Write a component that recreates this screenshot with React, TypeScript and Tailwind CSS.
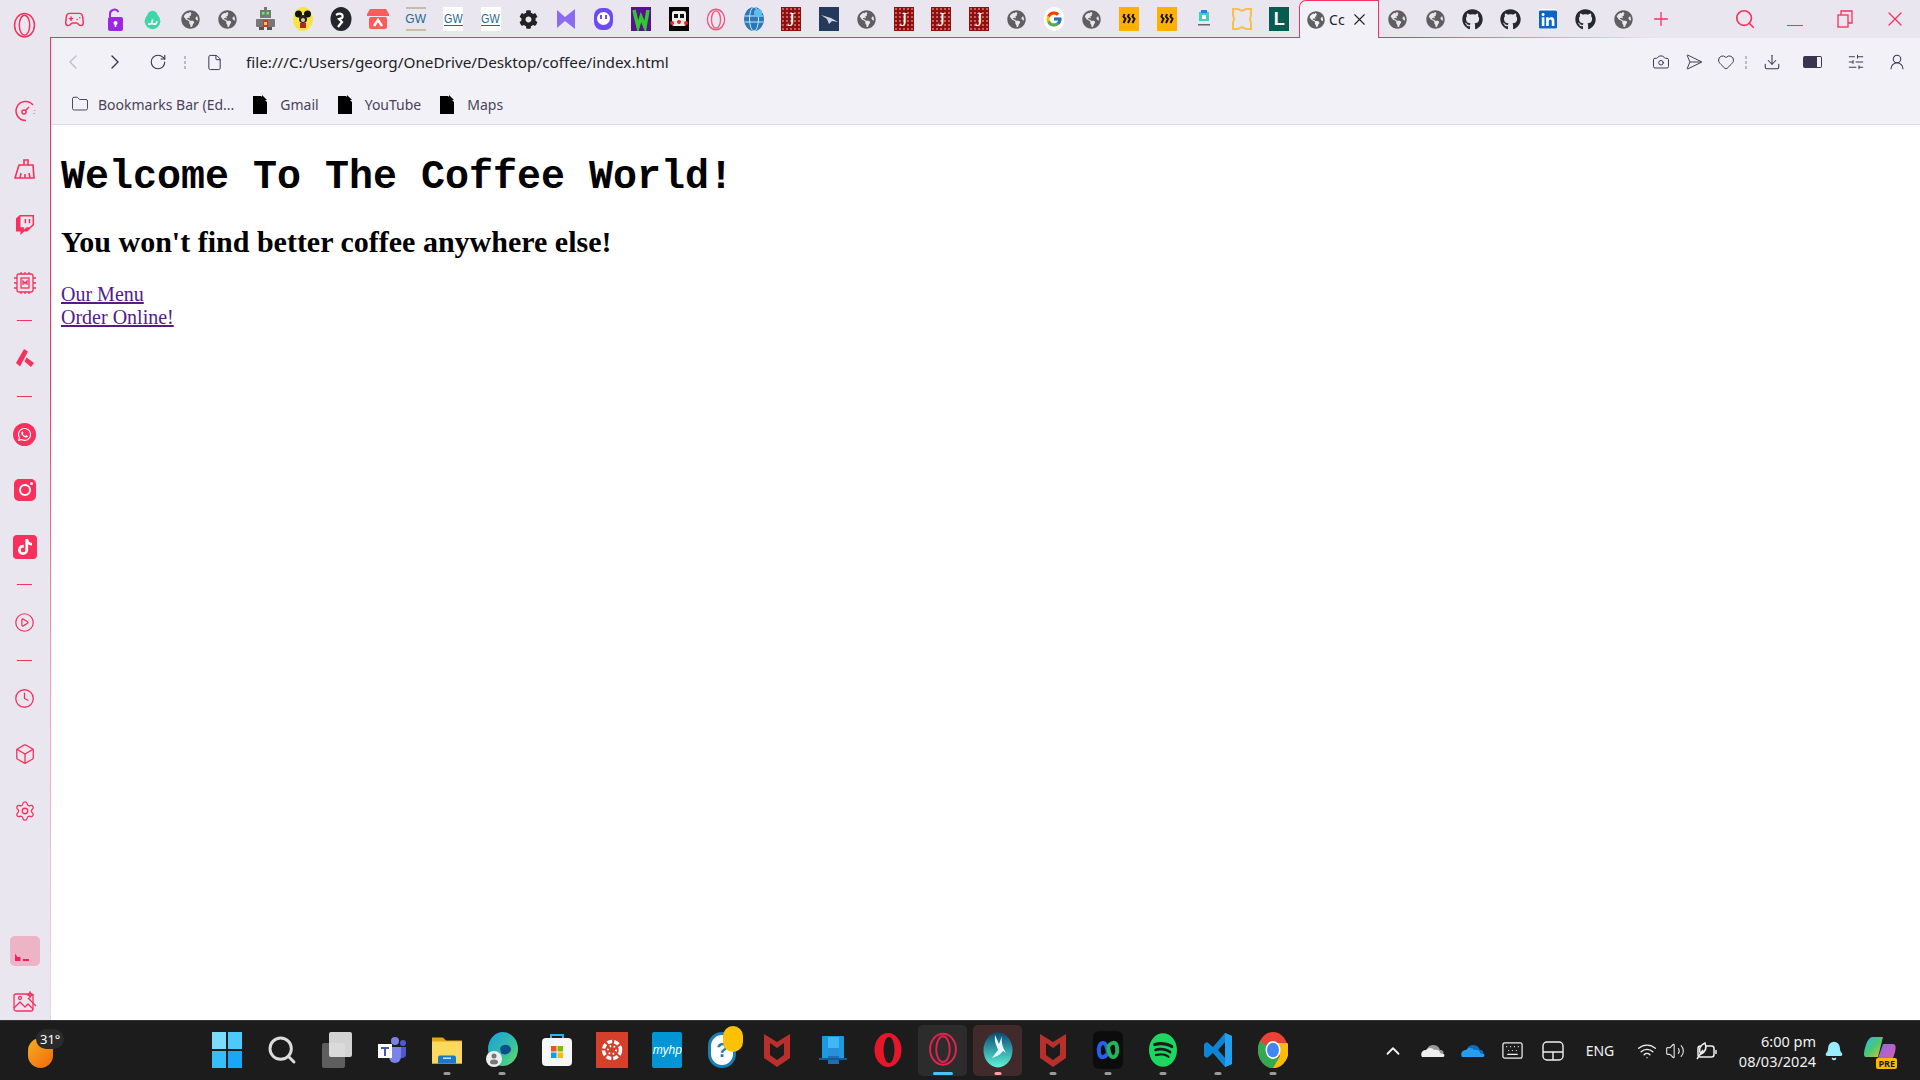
import React from "react";
import { FaGithub, FaGlobeAmericas, FaLinkedin, FaTwitch, FaWhatsapp, FaTiktok, FaSpotify, FaCog } from "react-icons/fa";
import { FcGoogle } from "react-icons/fc";
import {
  Gamepad2, ChevronLeft, ChevronRight, RotateCw, File, Folder, Camera, Send, Heart, Download,
  SlidersHorizontal, UserRound, Search, X, Plus, CirclePlay, Clock, Box, Settings, ChevronUp, Wifi, Volume2, Keyboard, Bell,
} from "lucide-react";

const RED = "#f8305c";
const Globe = () => <FaGlobeAmericas size={19} color="#5f5f5f" />;
const Gh = () => <FaGithub size={21} color="#24292f" />;
const J = () => (
  <div className="w-5 h-6 bg-[#8f0f0f] bg-[radial-gradient(#c86060_1px,transparent_1px)] bg-[length:4px_4px] text-white flex items-center justify-center text-[19px] leading-none [font-family:'Liberation_Serif',serif]">J</div>
);
const Gw = ({ tan }: { tan?: boolean }) => (
  <div className={`w-5 h-6 flex flex-col items-center justify-center text-[12px] leading-[12px] [font-family:'Liberation_Sans',sans-serif] text-[#1d6a8f] ${tan ? "bg-transparent border-y-2 border-[#c9bda3]" : "bg-white"}`}>
    <span className={tan ? "" : "border-b border-[#1d6a8f] scale-x-90"}>GW</span>
  </div>
);
const Heat = () => (
  <div className="w-5 h-6 bg-[#ffb000] flex items-center justify-center">
    <svg width="14" height="12" viewBox="0 0 14 12" fill="none" stroke="#111" strokeWidth="2">
      <path d="M2.5 1 l-1 2.5 l2 2.5 l-2 4M7 1 l-1 2.5 l2 2.5 l-2 4M11.5 1 l-1 2.5 l2 2.5 l-2 4" />
    </svg>
  </div>
);
const Ring = ({ c = RED, s = 24 }: { c?: string; s?: number }) => (
  <svg width={s} height={s * 1.15} viewBox="0 0 24 28" fill="none" stroke={c} strokeWidth="1.6">
    <ellipse cx="12" cy="14" rx="10.5" ry="12.5" />
    <ellipse cx="12" cy="14" rx="5.5" ry="10.5" />
  </svg>
);
const PageFile = () => (
  <svg width="14" height="19" viewBox="0 0 14 19"><path d="M0 1h8l6 6v12H0z" fill="#000" /><path d="M9 0l5 5H9z" fill="#000" /></svg>
);

const tabs: React.ReactNode[] = [
  <Gamepad2 size={21} color={RED} strokeWidth={1.7} className="-translate-x-[3px]" />,
  <svg width="15" height="23" viewBox="0 0 15 23"><path d="M2 9V6a4.500 4.500 0 0 1 8.500-2" stroke="#9b27e0" strokeWidth="2" fill="none" /><rect y="9" width="15" height="14" rx="2" fill="#9b27e0" /><circle cx="7.500" cy="15" r="2" fill="#fff" /><rect x="6.700" y="15" width="1.600" height="4" fill="#fff" /></svg>,
  <svg width="21" height="21" viewBox="0 0 24 24"><circle cx="12" cy="14" r="9" fill="#3fd6a7" /><circle cx="12" cy="8" r="6" fill="#3fd6a7" /><path d="M7 17c4 1 5-1 5-5m0 5c3 1 5 0 5-3" stroke="#fff" strokeWidth="2" fill="none" /></svg>,
  <Globe />,
  <Globe />,
  <svg width="21" height="24" viewBox="0 0 21 24"><rect x="9" y="0" width="3" height="3" fill="#777" /><rect x="5" y="3" width="11" height="8" fill="#777" /><rect x="7" y="5" width="2.500" height="2.500" fill="#5f5" /><rect x="11.500" y="5" width="2.500" height="2.500" fill="#5f5" /><rect x="1" y="12" width="19" height="8" rx="1" fill="#777" /><rect x="8" y="13" width="5" height="7" fill="#c33" /><rect x="9" y="15" width="3" height="3" fill="#ec3" /><rect x="4" y="20" width="5" height="3" fill="#555" /><rect x="12" y="20" width="5" height="3" fill="#555" /></svg>,
  <svg width="20" height="24" viewBox="0 0 20 24"><ellipse cx="10" cy="12" rx="10" ry="12" fill="#f6e443" /><circle cx="5.500" cy="7" r="3.500" fill="#111" /><circle cx="14.500" cy="7" r="3.500" fill="#111" /><circle cx="10" cy="12" r="4" fill="#222" /><circle cx="10" cy="13" r="2" fill="#e8c9a0" /><rect x="7" y="16" width="6" height="5" fill="#b22" /></svg>,
  <svg width="22" height="24" viewBox="0 0 22 24"><ellipse cx="11" cy="12" rx="10.500" ry="12" fill="#23262b" /><path d="M6 8c5-3 8 0 6 3l-3 1 3 3-4 5" stroke="#fff" strokeWidth="2.200" fill="none" /></svg>,
  <svg width="22" height="22" viewBox="0 0 22 22"><path d="M3 1h16l3 5v2H0V6z" fill="#fa5c5c" /><rect x="2" y="9" width="18" height="12" rx="2" fill="#fa5c5c" /><path d="M7 18l4-6 4 6" stroke="#fff" strokeWidth="2.400" fill="none" /></svg>,
  <Gw tan />,
  <Gw />,
  <Gw />,
  <FaCog size={19} color="#222" />,
  <svg width="20" height="22" viewBox="0 0 20 22"><path d="M1 2l8 7 10-8v20l-10-8-8 7z" fill="#8b6cf0" /></svg>,
  <svg width="21" height="24" viewBox="0 0 21 24"><rect x="1" y="1" width="19" height="22" rx="8" fill="#6a4cf0" /><circle cx="10.500" cy="11.500" r="6.500" fill="#fff" /><rect x="7" y="8" width="2" height="4" fill="#6a4cf0" /><rect x="12" y="8" width="2" height="4" fill="#6a4cf0" /></svg>,
  <svg width="20" height="24" viewBox="0 0 20 24"><rect width="20" height="24" fill="#5a0f90" /><path d="M3 3l4 17 3-10 4 10 3-17" stroke="#2fc92f" strokeWidth="3.500" fill="none" /></svg>,
  <svg width="20" height="24" viewBox="0 0 20 24"><rect width="20" height="24" fill="#050505" /><rect x="3" y="4" width="14" height="15" rx="2" fill="#eee" /><rect x="5" y="7" width="4" height="4" fill="#111" /><rect x="11" y="7" width="4" height="4" fill="#111" /><circle cx="3" cy="16" r="2" fill="#e22" /><circle cx="17" cy="16" r="2" fill="#e22" /><circle cx="10" cy="15" r="2" fill="#e22" /></svg>,
  <Ring s={20} c="#f9527c" />,
  <svg width="20" height="24" viewBox="0 0 20 24"><ellipse cx="10" cy="12" rx="10" ry="12" fill="#2a78b8" /><ellipse cx="10" cy="12" rx="4.500" ry="12" fill="none" stroke="#cfe8f8" /><path d="M1 9h18M1 15h18" stroke="#cfe8f8" /><circle cx="14" cy="6" r="4" fill="#5cc0ee" /></svg>,
  <J />,
  <svg width="20" height="24" viewBox="0 0 20 24"><rect width="20" height="24" fill="#233a5a" /><path d="M2 8l10 3 7 4-6-1-3 3-2-5z" fill="#cdd5df" /></svg>,
  <Globe />,
  <J />,
  <J />,
  <J />,
  <Globe />,
  <div className="w-5 h-6 rounded-full bg-white flex items-center justify-center"><FcGoogle size={18} /></div>,
  <Globe />,
  <Heat />,
  <Heat />,
  <svg width="16" height="20" viewBox="0 0 16 20"><rect x="3" y="3" width="10" height="9" fill="#3ad1c0" /><rect x="5" y="1" width="6" height="3" fill="#2a7fd0" /><rect x="6" y="6" width="4" height="4" fill="#fff" /><rect x="2" y="15" width="12" height="1.500" fill="#666" /></svg>,
  <svg width="20" height="24" viewBox="0 0 20 24" fill="none" stroke="#f6c04a" strokeWidth="2"><path d="M1 2h5l4 2 4-2h5v6l-1 4 1 4v6h-5l-4-2-4 2H1v-6l1-4-1-4z" /></svg>,
  <div className="w-5 h-6 bg-[#055d52] text-white font-bold text-[18px] leading-none flex items-center justify-center [font-family:'Liberation_Sans',sans-serif]">L</div>,
];

const after: React.ReactNode[] = [
  <Globe />,
  <Globe />,
  <Gh />,
  <Gh />,
  <div className="w-[18px] h-5 bg-white flex items-center justify-center"><FaLinkedin size={21} color="#0a66c2" /></div>,
  <Gh />,
  <Globe />,
  <Plus size={22} color={RED} strokeWidth={1.4} />,
];

const Broom = () => (
  <svg width="24" height="24" viewBox="0 0 24 24" fill="none" stroke={RED} strokeWidth="1.6"><path d="M11 8V3h4v5" /><path d="M6 8h14l1 13H2z" /><path d="M7 21l1-5M12 21v-4M17 21l-1-5" /></svg>
);

const side: { cls: string; node: React.ReactNode }[] = [
  { cls: "mt-[10px]", node: <Ring s={23} /> },
  { cls: "mt-[56px]", node: <svg width="22" height="22" viewBox="0 0 22 22" fill="none" stroke={RED} strokeWidth="1.5"><path d="M19 5A9.500 9.500 0 1 0 12 20.400" /><path d="M20.500 10v.5M20 13.500v.5" /><circle cx="10" cy="12" r="2" /><path d="M11.500 10.500L15 7" /></svg> },
  { cls: "mt-[28px]", node: <Broom /> },
  { cls: "mt-[26px]", node: <FaTwitch size={20} color={RED} /> },
  { cls: "mt-[28px]", node: <svg width="24" height="24" viewBox="0 0 24 24" fill="none" stroke={RED} strokeWidth="1.3"><rect x="4" y="3" width="16" height="18" rx="2" /><rect x="8" y="7" width="8" height="10" /><path d="M8 1v2M12 1v2M16 1v2M8 21v2M12 21v2M16 21v2M1 7h3M1 12h3M1 17h3M20 7h3M20 12h3M20 17h3" /><path d="M10 14v-4l2 2.500 2-2.500v4" /></svg> },
  { cls: "mt-[7px]", node: <div className="w-[15px] h-px bg-[#f8305c]" /> },
  { cls: "mt-[8px]", node: <svg width="20" height="20" viewBox="0 0 20 20" fill={RED}><path d="M9 1l4 2.500-8 15L1 15zM11.500 9.500l7.500 5.500-3 4-6.500-5.500z" /></svg> },
  { cls: "mt-[8px]", node: <div className="w-[15px] h-px bg-[#f8305c]" /> },
  { cls: "mt-[8px]", node: <div className="w-[23px] h-[23px] rounded-full bg-[#f8305c] flex items-center justify-center"><FaWhatsapp size={15} color="#fff" /></div> },
  { cls: "mt-[26px]", node: <div className="w-[22px] h-[22px] rounded-[5px] bg-[#f8305c] relative flex items-center justify-center"><div className="w-[12px] h-[12px] rounded-full border-[2.500px] border-white" /><div className="absolute top-[3px] right-[3px] w-[3px] h-[3px] rounded-full bg-white" /></div> },
  { cls: "mt-[27px]", node: <div className="w-6 h-6 rounded-[4px] bg-[#f8305c] flex items-center justify-center"><FaTiktok size={16} color="#fff" /></div> },
  { cls: "mt-[7px]", node: <div className="w-[15px] h-px bg-[#f8305c]" /> },
  { cls: "mt-[8px]", node: <CirclePlay size={21} color={RED} strokeWidth={1.4} /> },
  { cls: "mt-[8px]", node: <div className="w-[15px] h-px bg-[#f8305c]" /> },
  { cls: "mt-[8px]", node: <Clock size={21} color={RED} strokeWidth={1.5} /> },
  { cls: "mt-[26px]", node: <Box size={22} color={RED} strokeWidth={1.4} /> },
  { cls: "mt-[27px]", node: <Settings size={22} color={RED} strokeWidth={1.4} /> },
  { cls: "mt-[110px]", node: <div className="w-[30px] h-[30px] rounded-[5px] bg-[#edb3c6] flex items-end gap-[2px] pl-[5px] pb-[5px]"><div className="w-[6px] h-2 bg-[#f8205a] [clip-path:polygon(0_0,50%_50%,100%_50%,100%_100%,0_100%)]" /><div className="w-[6px] h-[2px] bg-[#f8205a]" /></div> },
  { cls: "mt-[21px]", node: <svg width="24" height="22" viewBox="0 0 24 22" fill="none" stroke={RED} strokeWidth="1.3"><rect x="1" y="3" width="19" height="17" rx="2" /><path d="M1 17l6-6 5 5 3-3 5 5M15 7l8 8M17 1l.8 2 2 .8-2 .8-.8 2-.8-2-2-.8 2-.8z" /><circle cx="7" cy="7" r="1.500" /></svg> },
];

const McAfee = () => (
  <svg width="28" height="36" viewBox="0 0 28 36"><path d="M1 2l13 8 13-8v24l-13 9-13-9z" fill="#b8302c" /><path d="M7 11l7 5 7-5v12l-7 5-7-5z" fill="#1c1c1c" /></svg>
);

const taskIcons: { node: React.ReactNode; bar?: string; bg?: string }[] = [
  { node: <div className="grid grid-cols-2 gap-[2px] w-[30px] h-[36px]"><div className="bg-[#7bdcff]" /><div className="bg-[#4cc9fd]" /><div className="bg-[#36bdfc]" /><div className="bg-[#16a8f6]" /></div> },
  { node: <Search size={32} color="#dcdcdc" strokeWidth={2.2} /> },
  { node: <div className="relative w-[30px] h-[36px]"><div className="absolute left-0 bottom-0 w-[23px] h-[25px] rounded-[2px] bg-[#5e5e5e]" /><div className="absolute right-0 top-0 w-[23px] h-[25px] rounded-[2px] bg-[#e8e8e8] opacity-90" /></div> },
  { node: <svg width="30" height="30" viewBox="0 0 30 28"><circle cx="18" cy="5" r="4" fill="#7b83eb" /><circle cx="26" cy="7" r="3" fill="#5059c9" /><path d="M12 11h12v10a6 6 0 0 1-12 0z" fill="#7b83eb" /><path d="M24 11h5v8a4 4 0 0 1-5 3z" fill="#5059c9" /><rect x="1" y="8" width="14" height="14" fill="#fff" /><path d="M4 11h8v2H9v7H7v-7H4z" fill="#4b53bc" /></svg> },
  { bar: "#9a9a9a", node: <svg width="30" height="33" viewBox="0 0 30 28"><path d="M0 2h11l3 3h16v23H0z" fill="#e3a80d" /><rect y="6" width="30" height="22" fill="#fbd85e" /><path d="M6 28v-6a2 2 0 0 1 2-2h14a2 2 0 0 1 2 2v6z" fill="#1a78c6" /><rect x="11" y="22" width="8" height="1.500" fill="#bfe3ff" /></svg> },
  { bar: "#9a9a9a", node: <svg width="32" height="36" viewBox="0 0 32 36"><defs><linearGradient id="edg" x1="0" y1="0" x2="1" y2="1"><stop offset="0" stopColor="#1b9de2" /><stop offset="0.600" stopColor="#35c1a0" /><stop offset="1" stopColor="#6fdc5b" /></linearGradient></defs><ellipse cx="17" cy="17" rx="15" ry="17" fill="url(#edg)" /><path d="M14 16c3-5 10-4 11 1 0 5-7 7-10 4z" fill="#0d4f8c" /><circle cx="8" cy="27" r="8" fill="#eee" /><circle cx="8" cy="24" r="2.500" fill="#777" /><ellipse cx="8" cy="30" rx="4" ry="2.500" fill="#777" /></svg> },
  { node: <svg width="30" height="36" viewBox="0 0 30 36"><path d="M9 7V3h12v4" stroke="#2cb3ea" strokeWidth="2" fill="none" /><rect y="6" width="30" height="28" rx="4" fill="#f7f7f7" /><rect x="9" y="14" width="5.500" height="5.500" fill="#f25022" /><rect x="15.500" y="14" width="5.500" height="5.500" fill="#7fba00" /><rect x="9" y="20.500" width="5.500" height="5.500" fill="#00a4ef" /><rect x="15.500" y="20.500" width="5.500" height="5.500" fill="#ffb900" /></svg> },
  { node: <div className="w-[32px] h-9 bg-[#d5402b] flex items-center justify-center"><svg width="22" height="22" viewBox="0 0 22 22" fill="none" stroke="#fff"><circle cx="11" cy="11" r="8.500" strokeWidth="3.500" strokeDasharray="5 2" /><circle cx="11" cy="11" r="4" strokeWidth="2" strokeDasharray="1.500 2.500" /></svg></div> },
  { node: <div className="w-[30px] h-9 rounded-[2px] bg-[#0096d6] text-white italic text-[12px] flex items-center justify-center [font-family:'Liberation_Sans',sans-serif]">myhp</div> },
  { node: <div className="relative w-[30px] h-9 flex items-center justify-center"><div className="w-[28px] h-[36px] rounded-full bg-white border-[3px] border-[#1a7fb5] text-[#1a7fb5] font-bold text-[20px] flex items-center justify-center [font-family:'Liberation_Sans',sans-serif]">?</div><div className="absolute -top-[6px] -right-[6px] w-5 h-[26px] rounded-full bg-[#ffc107]" /></div> },
  { node: <McAfee /> },
  { node: <svg width="30" height="32" viewBox="0 0 30 32"><rect x="4" y="2" width="22" height="24" rx="1" fill="#1a9be0" /><rect x="10" y="3" width="11" height="27" fill="#45b6f4" /><rect x="10" y="14" width="11" height="8" fill="#2a8fd8" /><rect x="10" y="22" width="11" height="8" fill="#1b6db5" /><rect x="1" y="24" width="28" height="2" fill="#135a96" /></svg> },
  { node: <svg width="28" height="36" viewBox="0 0 28 36"><ellipse cx="14" cy="18" rx="13.500" ry="17" fill="#e6162b" /><ellipse cx="15" cy="18" rx="5.500" ry="13" fill="#1c1c1c" /></svg> },
  { bar: "#4cc2ff", bg: "bg-[#2c2c2c]", node: <Ring s={30} c="#e5224f" /> },
  { bar: "#ff9aa8", bg: "bg-[#402a2c]", node: <svg width="30" height="36" viewBox="0 0 30 36"><defs><linearGradient id="aur" x1="0" y1="0" x2="0" y2="1"><stop offset="0" stopColor="#0a4a72" /><stop offset="1" stopColor="#5ff5dc" /></linearGradient></defs><ellipse cx="15" cy="18" rx="14.500" ry="17.500" fill="url(#aur)" /><path d="M12 3c-1 8 2 11 3 15l-6 8c6-2 9-4 11-7l3 2c-3-5-5-10-4-17l-3 8z" fill="#e5f7ff" /></svg> },
  { bar: "#9a9a9a", node: <McAfee /> },
  { bar: "#9a9a9a", node: <div className="w-[30px] h-[38px] rounded-[6px] bg-[#0c0c0c] flex items-center justify-center"><svg width="26" height="22" viewBox="0 0 26 22" fill="none" strokeWidth="4"><path d="M13 14c-3 5-8 6-9 0S5 4 8 4s4 4 5 10" stroke="#2a5cf0" /><path d="M13 8c3-5 8-6 9 0s-1 10-4 10-4-4-5-10" stroke="#23b45a" /></svg></div> },
  { bar: "#9a9a9a", node: <div className="w-[28px] h-[36px] flex items-center justify-center"><FaSpotify size={30} color="#1ed760" className="scale-y-[1.200]" /></div> },
  { bar: "#9a9a9a", node: <svg width="30" height="36" viewBox="0 0 30 36"><path d="M22 1l7 3v28l-7 3-12-14-6 5-3-2v-12l3-2 6 5z" fill="#0e85d4" /><path d="M22 10l-7 8 7 8z" fill="#1c1c1c" /><path d="M22 1l7 3v28l-7 3z" fill="#22a0ef" /></svg> },
  { bar: "#9a9a9a", node: <svg width="30" height="36" viewBox="0 0 30 36"><ellipse cx="15" cy="18" rx="15" ry="18" fill="#ea4335" /><path d="M15 18L2 9A15 18 0 0 0 15 36l7-9z" fill="#34a853" /><path d="M15 11h14.500A15 18 0 0 1 15 36l7-12z" fill="#fbbc05" /><ellipse cx="15" cy="18" rx="7.500" ry="9" fill="#fff" /><ellipse cx="15" cy="18" rx="6" ry="7.300" fill="#4285f4" /></svg> },
];

const Dots = () => (
  <div className="flex flex-col gap-[2px]">
    <div className="w-[2px] h-[3px] bg-[#bcb8cc]" />
    <div className="w-[2px] h-[3px] bg-[#bcb8cc]" />
    <div className="w-[2px] h-[3px] bg-[#bcb8cc]" />
  </div>
);

const Cloud = ({ a, b }: { a: string; b: string }) => (
  <svg width="24" height="15" viewBox="0 0 24 15"><path d="M6 6a7 7 0 0 1 13 1c3 0 4 2 3 4z" fill={a} /><path d="M1 14c-2-3 0-7 4-7 3-3 7-2 8 0 4-1 6 1 6 3l4 1c1 2 0 3-2 3z" fill={b} /></svg>
);

const tool = "text-[#3b3450]";

export default function App() {
  return (
    <div className="w-[1920px] h-[1080px] overflow-hidden flex flex-col bg-white [font-family:'Noto_Sans',sans-serif]">
      <div className="flex h-[1020px]">
        <aside className="relative w-[51px] shrink-0 bg-[#e9e6f0] flex flex-col items-center pr-[2px]">
          {side.map((s, i) => (
            <div key={i} className={`${s.cls} h-[30px] w-full flex items-center justify-center`}>{s.node}</div>
          ))}
          <div className="absolute right-0 top-[37px] bottom-0 w-px bg-[linear-gradient(to_bottom,#f8305c_35%,#f6a0b8_65%,#e9d8e4_100%)]" />
        </aside>

        <div className="flex-1 flex flex-col min-w-0">
          <div className="relative h-[38px] shrink-0 bg-[#e9e6f0] flex items-center pl-[8px]">
            {tabs.map((t, i) => (
              <div key={i} className="w-[37.55px] h-[36px] shrink-0 flex items-center justify-center">{t}</div>
            ))}
            <div className="relative z-10 ml-[1px] h-[38px] w-[80px] shrink-0 bg-[#f3f1f8] border border-b-0 border-[#f8305c] rounded-tl-[7px] rounded-tr-[1px] flex items-center pl-[7px]">
              <FaGlobeAmericas size={18} color="#5f5f5f" />
              <span className="ml-[4px] w-[17px] text-[14px] text-[#222]">Cc</span>
              <X size={19} color="#222" strokeWidth={1.4} className="ml-[4px]" />
            </div>
            {after.map((t, i) => (
              <div key={i} className="w-[37.55px] h-[36px] shrink-0 flex items-center justify-center first:ml-[2px]">{t}</div>
            ))}
            <div className="ml-auto flex items-center">
              <div className="w-[50px] h-[38px] flex items-center justify-center"><Search size={22} color={RED} strokeWidth={1.8} /></div>
              <div className="w-[50px] h-[38px] flex items-center justify-center pt-[12px]"><div className="w-[16px] h-px bg-[#f8305c]" /></div>
              <div className="w-[50px] h-[38px] flex items-center justify-center"><svg width="16" height="18" viewBox="0 0 16 18" fill="none" stroke={RED} strokeWidth="1.300"><rect x="1" y="5" width="10" height="12" /><path d="M4 5V1h11v12h-4" /></svg></div>
              <div className="w-[50px] h-[38px] flex items-center justify-center"><X size={24} color={RED} strokeWidth={1.3} /></div>
            </div>
            <div className="absolute left-0 right-0 bottom-0 h-px bg-[linear-gradient(to_right,#f8305c_72%,transparent_86%)]" />
          </div>

          <div className="h-[87px] shrink-0 bg-[#f3f1f8] border-b border-[#dcd9e6] flex flex-col">
            <div className="h-[48px] flex items-center">
              <div className="w-[44px] flex justify-center"><ChevronLeft size={24} color="#bcb8c9" strokeWidth={1.2} /></div>
              <div className="w-[40px] flex justify-center"><ChevronRight size={24} color="#3b3450" strokeWidth={1.4} /></div>
              <div className="w-[46px] flex justify-center"><RotateCw size={18} color="#3b3450" strokeWidth={1.5} /></div>
              <div className="w-[8px] flex justify-center"><Dots /></div>
              <div className="w-[50px] flex justify-center"><File size={17} color="#3b3450" strokeWidth={1.4} /></div>
              <span className="ml-[7px] pt-px text-[15.3px] text-[#222] whitespace-nowrap">file:///C:/Users/georg/OneDrive/Desktop/coffee/index.html</span>
              <div className="ml-auto flex items-center pr-[7px]">
                <div className={`w-[34px] flex justify-center ${tool}`}><Camera size={18} strokeWidth={1.3} className="translate-x-[1px]" /></div>
                <div className={`w-[32px] flex justify-center ${tool}`}><Send size={18} strokeWidth={1.2} className="rotate-45 -translate-x-[2px]" /></div>
                <div className={`w-[32px] flex justify-center ${tool}`}><Heart size={18} strokeWidth={1.3} className="translate-x-[1px]" /></div>
                <div className="w-[10px] flex justify-center"><Dots /></div>
                <div className={`w-[42px] flex justify-center ${tool}`}><Download size={18} strokeWidth={1.4} /></div>
                <div className="w-[38px] flex justify-center"><div className="flex items-center"><div className="w-[14px] h-[12px] rounded-l-[2px] bg-[#3b3450]" /><div className="w-[5px] h-[12px] rounded-r-[2px] border border-l-0 border-[#3b3450]" /></div></div>
                <div className={`w-[50px] flex justify-center ${tool}`}><SlidersHorizontal size={18} strokeWidth={1.3} /></div>
                <div className={`w-[32px] flex justify-center ${tool}`}><UserRound size={18} strokeWidth={1.4} /></div>
              </div>
            </div>
            <div className="h-[36px] flex items-center pl-[20px] text-[14px] text-[#4a4358] gap-[19px]">
              <div className="flex items-center gap-[9px]"><Folder size={18} color="#3b3450" strokeWidth={1.2} /><span>Bookmarks Bar (Ed...</span></div>
              <div className="flex items-center gap-[13px]"><PageFile /><span>Gmail</span></div>
              <div className="flex items-center gap-[13px]"><PageFile /><span>YouTube</span></div>
              <div className="flex items-center gap-[13px]"><PageFile /><span>Maps</span></div>
            </div>
          </div>

          <main className="flex-1 bg-white pl-[10px] text-black [font-family:'Liberation_Serif',serif]">
            <h1 className="mt-[30px] text-[40px] leading-[45px] font-bold [font-family:'Liberation_Mono',monospace]">Welcome To The Coffee World!</h1>
            <h2 className="mt-[25px] text-[30px] leading-[34px] font-bold">You won't find better coffee anywhere else!</h2>
            <div className="mt-[24px] text-[20px] leading-[23px]">
              <a className="block w-fit underline text-[#551a8b]" href="#menu">Our Menu</a>
              <a className="block w-fit underline text-[#551a8b]" href="#order">Order Online!</a>
            </div>
          </main>
        </div>
      </div>

      <footer className="h-[60px] shrink-0 bg-[#1c1c1c] border-t border-[#333] flex items-center text-[#f2f2f2]">
        <div className="relative w-[199px] shrink-0 h-full">
          <div className="absolute left-[28px] top-[17px] w-[25px] h-[30px] rounded-full bg-[linear-gradient(135deg,#f6b01e,#f1690f)]" />
          <div className="absolute left-[36px] top-[8px] px-[4px] h-[20px] rounded-full bg-[#2b2b2b] text-[13px] leading-[20px] text-white">31°</div>
        </div>
        {taskIcons.map((t, i) => (
          <div key={i} className="relative w-[55.1px] h-full shrink-0 flex items-center justify-center pb-[2px]">
            {t.bg && <div className={`absolute left-[3px] right-[3px] top-[4px] bottom-[4px] rounded-[5px] ${t.bg}`} />}
            <div className="relative">{t.node}</div>
            {t.bar && (
              <div
                className={`absolute bottom-[5px] left-1/2 -translate-x-1/2 h-[3px] rounded-full ${t.bar === "#4cc2ff" ? "w-5" : "w-[7px]"}`}
                style={{ backgroundColor: t.bar }}
              />
            )}
          </div>
        ))}
        <div className="ml-auto flex items-center pr-[12px] h-full">
          <div className="w-[40px] flex justify-center"><ChevronUp size={22} color="#f2f2f2" strokeWidth={2} /></div>
          <div className="w-[40px] flex justify-center"><Cloud a="#9a9a9a" b="#eeeeee" /></div>
          <div className="w-[40px] flex justify-center"><Cloud a="#0f6cbd" b="#2a9cf0" /></div>
          <div className="w-[39px] flex justify-center"><Keyboard size={23} color="#eee" strokeWidth={1.3} /></div>
          <div className="w-[42px] flex justify-center"><svg width="22" height="20" viewBox="0 0 22 20" fill="none" stroke="#eee" strokeWidth="1.400"><rect x="1" y="1" width="20" height="18" rx="4" /><path d="M1 11h20M11 11v8" /></svg></div>
          <div className="w-[52px] text-center text-[14px]">ENG</div>
          <div className="ml-[7px] w-[28px] flex justify-center"><Wifi size={20} color="#eee" strokeWidth={1.6} /></div>
          <div className="w-[28px] flex justify-center"><Volume2 size={20} color="#ddd" strokeWidth={1.4} /></div>
          <div className="w-[36px] flex justify-center"><svg width="24" height="18" viewBox="0 0 24 18" fill="none" stroke="#eee" strokeWidth="1.500"><rect x="3" y="4" width="16" height="11" rx="2.500" /><path d="M21 8v4" /><path d="M10 1C5 3 3 8 6 12c4-2 6-6 4-11zM2 17l6-9" fill="#1c1c1c" /></svg></div>
          <div className="w-[91px] flex flex-col items-end text-[14.500px] leading-[20px]">
            <span>6:00 pm</span>
            <span>08/03/2024</span>
          </div>
          <div className="w-[36px] flex justify-center"><Bell size={20} color="#99ebff" fill="#99ebff" /></div>
          <div className="relative w-[56px] flex justify-center">
            <svg width="32" height="28" viewBox="0 0 32 28"><defs><linearGradient id="cpA" x1="0" y1="0" x2="1" y2="1"><stop offset="0" stopColor="#2cb8e8" /><stop offset="0.500" stopColor="#48c878" /><stop offset="1" stopColor="#e8c020" /></linearGradient><linearGradient id="cpB" x1="0" y1="0" x2="1" y2="1"><stop offset="0" stopColor="#7a6cf0" /><stop offset="1" stopColor="#f05a9c" /></linearGradient></defs><path d="M9 0h10l-5 20H2C-1 20 0 15 1 11 3 4 5 0 9 0z" fill="url(#cpA)" /><path d="M19 7h10c3 0 3 4 2 8-2 7-4 12-9 12H12z" fill="url(#cpB)" /></svg>
            <div className="absolute right-[11px] -bottom-[4px] h-[11px] px-[2px] rounded-[2px] bg-[#ffb900] text-[#1c1c1c] text-[9px] leading-[11px] font-bold">PRE</div>
          </div>
        </div>
      </footer>
    </div>
  );
}
